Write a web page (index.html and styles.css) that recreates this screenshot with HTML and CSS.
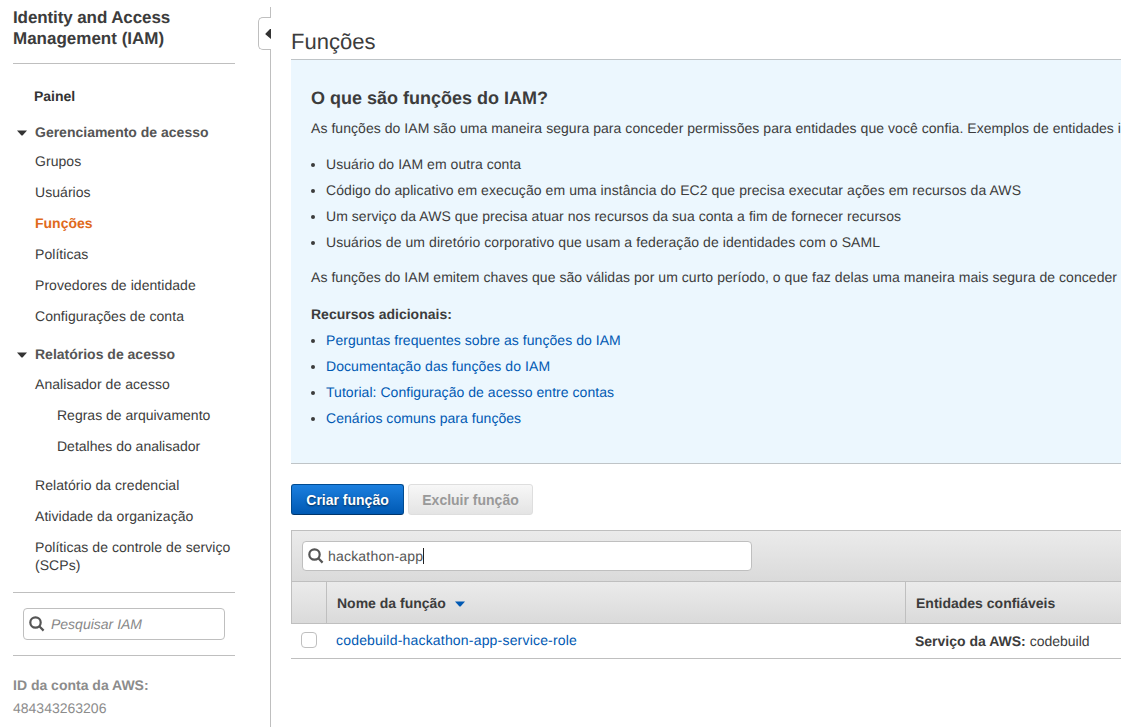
FILE: index.html
```html
<!DOCTYPE html>
<html lang="pt">
<head>
<meta charset="utf-8">
<title>Funções - IAM</title>
<link rel="stylesheet" href="styles.css">
</head>
<body>
<div class="app">
  <aside class="sidebar">
    <h1 class="brand"><span class="brand-a">Identity and Access</span><br><span class="brand-b">Management (IAM)</span></h1>
    <nav class="nav">
      <a class="home">Painel</a>
      <h2 class="group"><svg class="caret" viewBox="0 0 10 6"><path d="M0 0.5H10L6 5Q5 6 4 5Z"/></svg><span>Gerenciamento de acesso</span></h2>
      <ul class="links">
        <li>Grupos</li>
        <li>Usuários</li>
        <li class="active">Funções</li>
        <li>Políticas</li>
        <li>Provedores de identidade</li>
        <li>Configurações de conta</li>
      </ul>
      <h2 class="group reports"><svg class="caret" viewBox="0 0 10 6"><path d="M0 0.5H10L6 5Q5 6 4 5Z"/></svg><span>Relatórios de acesso</span></h2>
      <ul class="links access">
        <li>Analisador de acesso</li>
        <li class="child">Regras de arquivamento</li>
        <li class="child">Detalhes do analisador</li>
      </ul>
      <ul class="links other">
        <li>Relatório da credencial</li>
        <li>Atividade da organização</li>
        <li>Políticas de controle de serviço (SCPs)</li>
      </ul>
    </nav>
    <div class="side-search">
      <div class="field"><svg class="lens" viewBox="0 0 16 16"><circle cx="6.5" cy="6.5" r="5.2"/><path d="M10.3 10.3L14.6 14.6"/></svg><span>Pesquisar IAM</span></div>
    </div>
    <div class="account"><b>ID da conta da AWS:</b><span>484343263206</span></div>
  </aside>
  <div class="toggle"><svg viewBox="0 0 6 10"><path d="M6 0V10L0.6 5.6Q0 5 0.6 4.4L5 0Z"/></svg></div>
  <main class="main">
    <h1 class="title">Funções</h1>
    <section class="info">
      <h2>O que são funções do IAM?</h2>
      <p>As funções do IAM são uma maneira segura para conceder permissões para entidades que você confia. Exemplos de entidades i</p>
      <ul>
        <li><span>Usuário do IAM em outra conta</span></li>
        <li><span class="wide">Código do aplicativo em execução em uma instância do EC2 que precisa executar ações em recursos da AWS</span></li>
        <li><span>Um serviço da AWS que precisa atuar nos recursos da sua conta a fim de fornecer recursos</span></li>
        <li><span class="wide">Usuários de um diretório corporativo que usam a federação de identidades com o SAML</span></li>
      </ul>
      <p class="keys">As funções do IAM emitem chaves que são válidas por um curto período, o que faz delas uma maneira mais segura de conceder</p>
      <h3>Recursos adicionais:</h3>
      <ul class="resources">
        <li><a>Perguntas frequentes sobre as funções do IAM</a></li>
        <li><a class="wide">Documentação das funções do IAM</a></li>
        <li><a>Tutorial: Configuração de acesso entre contas</a></li>
        <li><a>Cenários comuns para funções</a></li>
      </ul>
    </section>
    <div class="actions">
      <button class="btn primary">Criar função</button>
      <button class="btn disabled">Excluir função</button>
    </div>
    <section class="grid">
      <div class="filter">
        <div class="field"><svg class="lens" viewBox="0 0 16 16"><circle cx="6.5" cy="6.5" r="5.2"/><path d="M10.3 10.3L14.6 14.6"/></svg><span class="term">hackathon-app</span><i class="cursor"></i></div>
      </div>
      <div class="row head">
        <div class="cell"></div>
        <div class="cell">Nome da função<svg class="caret sort" viewBox="0 0 10 6"><path d="M0 0.5H10L6 5Q5 6 4 5Z"/></svg></div>
        <div class="cell">Entidades confiáveis</div>
      </div>
      <div class="row body">
        <div class="cell"><span class="check"></span></div>
        <div class="cell role"><a>codebuild-hackathon-app-service-role</a></div>
        <div class="cell"><b>Serviço da AWS:</b>&nbsp;<span>codebuild</span></div>
      </div>
    </section>
  </main>
</div>
</body>
</html>
```

FILE: styles.css
```css
* { box-sizing: border-box; }
body {
  margin: 0;
  background: #fff;
  color: #3c3c3c;
  font: 14px/18px "Helvetica Neue", "Liberation Sans", Arial, sans-serif;
  text-rendering: geometricPrecision;
  overflow: hidden;
}
h1, h2, h3, p, ul { margin: 0; padding: 0; }
ul { list-style: none; }
a { color: #0059b3; }

.app { position: relative; display: flex; width: 1121px; height: 727px; overflow: hidden; }

/* Sidebar */
.sidebar { width: 271px; flex: none; margin-top: 7px; padding: 0 35px 0 13px; border-right: 1px solid #bfbfbf; }
.brand { height: 57px; font-size: 17px; line-height: 21px; border-bottom: 1px solid #bfbfbf; white-space: nowrap; }
.brand-a { letter-spacing: -0.1px; }
.nav { height: 528px; padding: 23px 0 0 22px; }
.home { display: block; margin-left: -1px; color: #333; font-weight: bold; }
.group { display: flex; align-items: center; margin: 18px 0 11px -18px; font-size: 14px; line-height: 18px; color: #555; white-space: nowrap; }
.group .caret { margin-right: 8px; }
.group.reports { margin: 20px 0 12px -18px; }
.caret { width: 10px; height: 6px; margin-top: 2px; fill: #333; }
.links { display: flex; flex-direction: column; gap: 13px; letter-spacing: 0.05px; }
.links.other { margin-top: 21px; }
.child { margin-left: 22px; letter-spacing: 0; }
.active { color: #e06a1c; font-weight: bold; letter-spacing: 0; }

.field { display: flex; align-items: center; background: #fff; border: 1px solid #bfbfbf; border-radius: 4px; white-space: nowrap; }
.lens { width: 16px; height: 16px; fill: none; stroke: #555; stroke-width: 2.2; }
.side-search { height: 64px; padding: 15px 10px; border: solid #bfbfbf; border-width: 1px 0; }
.side-search .field { height: 32px; padding-left: 5px; color: #888; font-style: italic; }
.side-search .lens { margin-right: 6px; }
.account { display: flex; flex-direction: column; gap: 5px; padding-top: 20px; color: #8c8c8c; }

.toggle {
  position: absolute; left: 258px; top: 17px; width: 13px; height: 33px;
  display: flex; align-items: center; justify-content: flex-end;
  background: #fff; border: 1px solid #bfbfbf; border-right: 0; border-radius: 5px 0 0 5px;
}
.toggle svg { width: 6px; height: 10px; fill: #333; }

/* Content */
.main { flex: 1; min-width: 0; padding-left: 20px; }
.title { height: 59px; padding-top: 29px; font-size: 22px; line-height: 26px; font-weight: normal; }
.info { height: 405px; padding: 26px 0 0 20px; background: #ecf7fe; border: solid #bfc4c7; border-width: 1px 0; white-space: nowrap; letter-spacing: 0.05px; }
.info h2 { font-size: 18px; line-height: 24px; margin-bottom: 9px; letter-spacing: 0; }
.info ul { padding: 14px 0 0 3px; }
.info li { display: flex; align-items: center; height: 26px; }
.info li::before { content: ""; width: 4px; height: 4px; margin: 2px 11px 0 -3px; border-radius: 50%; background: #3c3c3c; }
.info .wide { letter-spacing: 0.075px; }
.info .keys { margin-top: 13px; }
.info h3 { margin-top: 19px; font-size: 14px; line-height: 18px; letter-spacing: 0; }
.info .resources { padding-top: 4px; }

.actions { display: flex; gap: 4px; padding: 20px 0 15px; }
.btn { height: 31px; padding: 0; border-radius: 3px; font: bold 14px/18px "Liberation Sans", Arial, sans-serif; white-space: nowrap; }
.primary { width: 113px; color: #fff; background: linear-gradient(#1b7fdf, #0059b3); border: 1px solid #004b91; border-bottom-color: #00356b; text-shadow: 0 1px 2px #002b55; }
.disabled { width: 125px; color: #999; background: linear-gradient(#f7f7f7, #e4e4e4); border: 1px solid #dedede; }

.filter { height: 51px; padding: 10px; background: linear-gradient(#ebebeb, #dadada); border: solid #bfbfbf; border-width: 1px 0 0 1px; }
.filter .field { width: 450px; height: 30px; padding-left: 5px; color: #555; }
.filter .lens { margin-right: 4px; }
.term { letter-spacing: 0.2px; }
.cursor { width: 1px; height: 16px; background: #222; }
.row { display: grid; grid-template-columns: 35px 579px 1fr; }
.cell { display: flex; align-items: center; padding-left: 10px; white-space: nowrap; }
.head { height: 43px; background: linear-gradient(#ebebeb, #dadada); border: solid #bfbfbf; border-width: 1px 0 1px 1px; font-weight: bold; }
.head .cell:not(:last-child) { border-right: 1px solid #bfbfbf; }
.sort { margin-left: 9px; fill: #0059b3; }
.body { height: 35px; border-bottom: 1px solid #bfbfbf; }
.role { padding-bottom: 2px; letter-spacing: 0.19px; }
.check { width: 16px; height: 16px; margin-top: -2px; border: 1px solid #bfbfbf; border-radius: 4px; background: #fff; }
```
